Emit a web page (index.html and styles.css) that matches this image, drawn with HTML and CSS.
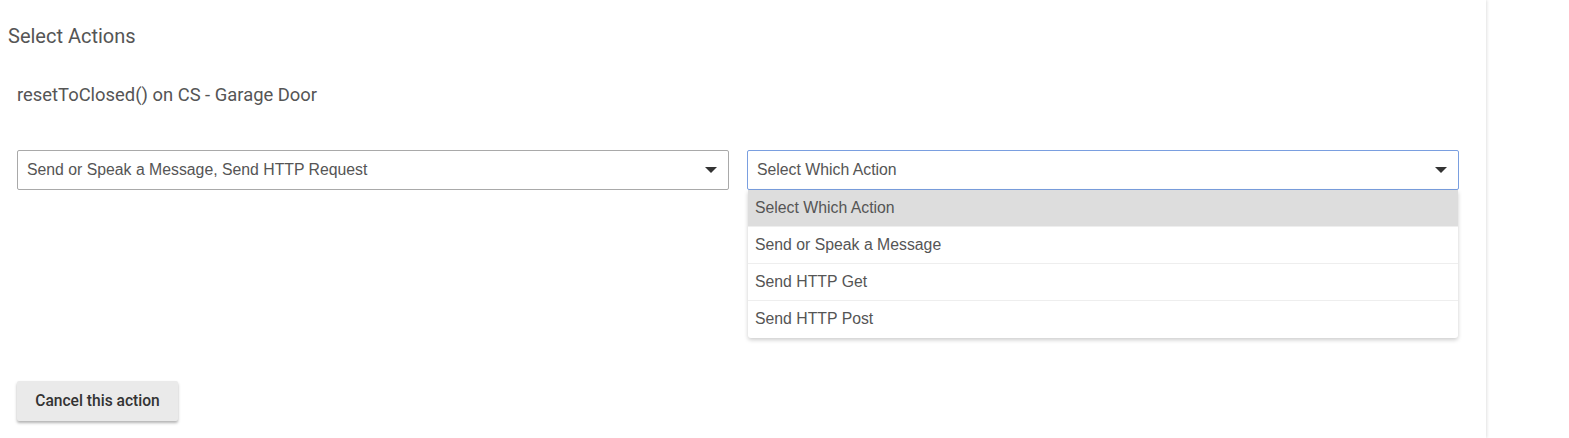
FILE: index.html
```html
<!DOCTYPE html>
<html>
<head>
<meta charset="utf-8">
<link rel="stylesheet" href="styles.css">
</head>
<body>
<div class="page">
  <div class="panel">
    <h2 class="title">Select Actions</h2>
    <div class="subtitle">resetToClosed() on CS - Garage Door</div>
    <div class="selects">
      <div class="select">
        <span class="value">Send or Speak a Message, Send HTTP Request</span>
        <span class="caret"></span>
      </div>
      <div class="select-wrap">
        <div class="select active">
          <span class="value">Select Which Action</span>
          <span class="caret"></span>
        </div>
        <ul class="menu">
          <li class="item selected">Select Which Action</li>
          <li class="item">Send or Speak a Message</li>
          <li class="item">Send HTTP Get</li>
          <li class="item">Send HTTP Post</li>
        </ul>
      </div>
    </div>
    <div class="actions">
      <button class="btn">Cancel this action</button>
    </div>
  </div>
</div>
</body>
</html>
```
FILE: styles.css
```css
html, body {
  margin: 0;
  padding: 0;
  background: #fff;
}
.page {
  width: 1569px;
  height: 438px;
  overflow: hidden;
}
.panel {
  width: 1486px;
  height: 438px;
  box-sizing: border-box;
  padding: 24px 0 0 8px;
  box-shadow: 1px 0 3px rgba(0,0,0,0.12);
  font-family: Roboto, "Liberation Sans", sans-serif;
}
.title {
  margin: 0;
  font-size: 20px;
  font-weight: 400;
  line-height: 24px;
  color: #555;
}
.subtitle {
  margin: 36px 0 0 9px;
  font-size: 18.4px;
  line-height: 22px;
  color: #555;
}
.selects {
  display: flex;
  gap: 18px;
  margin: 44px 0 0 9px;
}
.select-wrap {
  position: relative;
  width: 712px;
}
.select {
  box-sizing: border-box;
  width: 712px;
  height: 40px;
  border: 1px solid #a9a9a9;
  border-radius: 2px;
  display: flex;
  align-items: center;
  justify-content: space-between;
  padding: 0 10px 0 9px;
  font-family: "Liberation Sans", Arial, sans-serif;
  font-size: 15.8px;
  color: #555;
}
.select.active {
  border-color: #7a9fe0;
}
.caret {
  width: 0;
  height: 0;
  border-left: 6px solid transparent;
  border-right: 6px solid transparent;
  border-top: 6px solid #333;
  margin-right: 1px;
}
.menu {
  position: absolute;
  left: 1px;
  top: 40px;
  width: 710px;
  margin: 0;
  padding: 0;
  list-style: none;
  background: #fff;
  border-radius: 0 0 3px 3px;
  box-shadow: 0 2px 4px rgba(0,0,0,0.2);
  font-family: "Liberation Sans", Arial, sans-serif;
  font-size: 15.8px;
  color: #555;
}
.item {
  height: 37px;
  line-height: 36px;
  padding-left: 7px;
  border-bottom: 1px solid #eee;
  box-sizing: border-box;
}
.item:last-child {
  border-bottom: none;
}
.item.selected {
  background: #ddd;
}
.actions {
  margin: 191px 0 0 9px;
}
.btn {
  width: 161px;
  height: 40px;
  border: none;
  border-radius: 2px;
  background: #eaeaea;
  box-shadow: 0 2px 3px rgba(0,0,0,0.3);
  font-family: Roboto, "Liberation Sans", sans-serif;
  font-weight: 500;
  font-size: 15.6px;
  color: #333;
  padding: 0;
}
```
